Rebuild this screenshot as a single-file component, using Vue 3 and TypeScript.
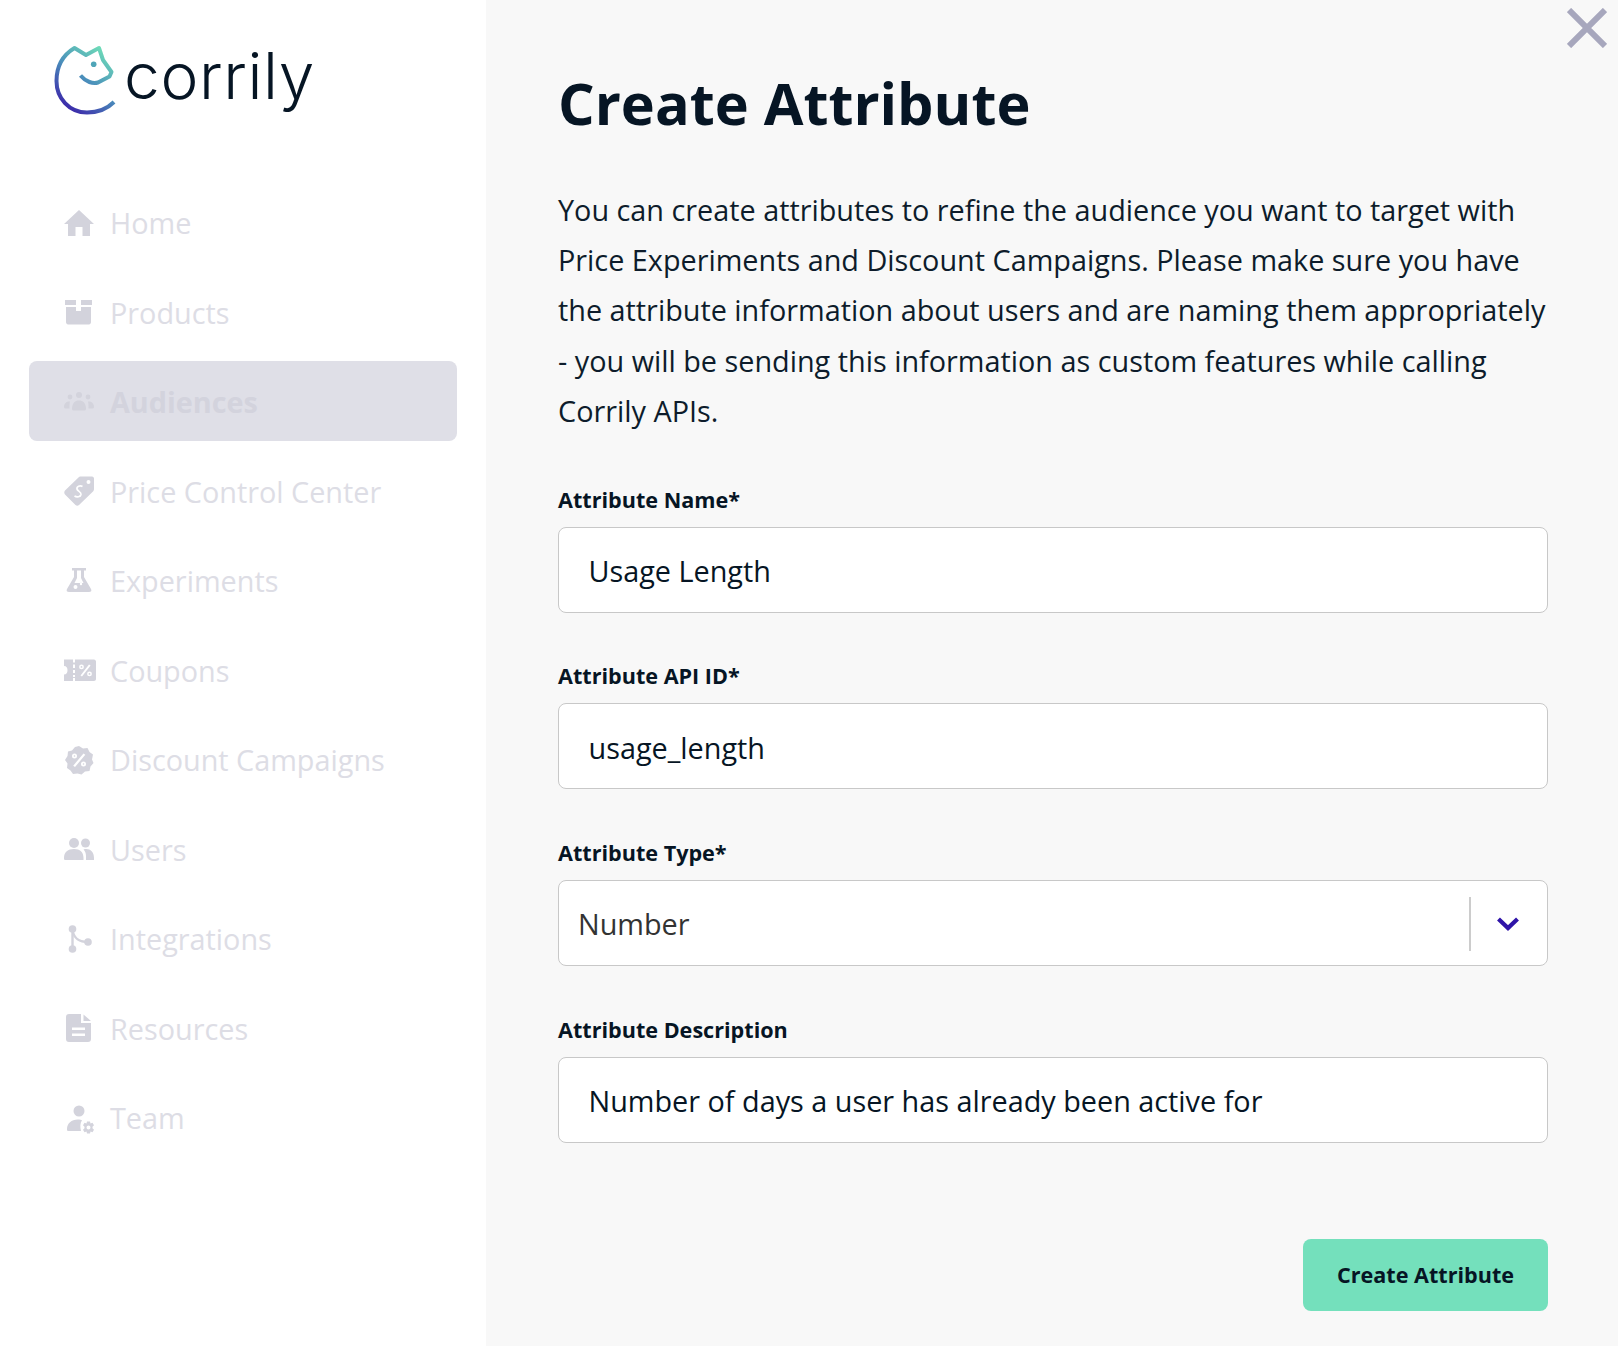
<script setup lang="ts">
const navItems = [
  { key: 'home', label: 'Home' },
  { key: 'products', label: 'Products' },
  { key: 'audiences', label: 'Audiences', active: true },
  { key: 'price', label: 'Price Control Center' },
  { key: 'experiments', label: 'Experiments' },
  { key: 'coupons', label: 'Coupons' },
  { key: 'discount', label: 'Discount Campaigns' },
  { key: 'users', label: 'Users' },
  { key: 'integrations', label: 'Integrations' },
  { key: 'resources', label: 'Resources' },
  { key: 'team', label: 'Team' },
]
</script>

<template>
  <div class="page">
    <aside class="sidebar">
      <div class="brand">
        <svg class="mark" viewBox="50 40 70 80" width="70" height="80" fill="none">
          <defs>
            <linearGradient id="catGrad" x1="60" y1="108" x2="104" y2="48" gradientUnits="userSpaceOnUse">
              <stop offset="0" stop-color="#3a1fa8" />
              <stop offset="0.5" stop-color="#4a8ebb" />
              <stop offset="1" stop-color="#70e0b8" />
            </linearGradient>
          </defs>
          <path
            d="M113 102C106 109 97 112.500 86 112.500C68 112.500 55.500 98 55.500 81C55.500 66 62 55 73.500 48L85 55L98 48L102 60L110.500 72L108.500 76.500L97 82.500C92 84 85 82 79.500 75.500"
            stroke="url(#catGrad)"
            stroke-width="4"
            stroke-linejoin="round"
          />
          <circle cx="92.700" cy="64.300" r="2.800" fill="#4fa5b8" />
        </svg>
        <span class="wordmark">corrily</span>
      </div>

      <nav class="nav">
        <a v-for="item in navItems" :key="item.key" class="nav-item" :class="{ active: item.active }">
          <svg class="icon" viewBox="0 0 30 30" width="30" height="30" fill="currentColor">
            <path v-if="item.key === 'home'" d="M15 2L30 16H26V28H18.500V19H11.500V28H4V16H0Z" />
            <template v-else-if="item.key === 'products'">
              <path d="M1 3H12V8H1ZM17 3H28V8H17Z" />
              <path d="M2 10H12V14H17V10H27V25C27 26.500 26 27.500 25 27.500H4C3 27.500 2 26.500 2 25Z" />
            </template>
            <template v-else-if="item.key === 'audiences'">
              <circle cx="15" cy="8" r="3" /><circle cx="6" cy="10" r="2.400" /><circle cx="24" cy="10" r="2.400" />
              <path d="M8 22C8 16 11 13.500 15 13.500C19 13.500 22 16 22 22C22 23 21 23.500 20 23.500H10C9 23.500 8 23 8 22Z" />
              <path d="M0 20C0 16 3 14 6 14.500C5.500 16 5.500 18 5.500 21.500H2C1 21.500 0 21 0 20ZM30 20C30 16 27 14 24 14.500C24.500 16 24.500 18 24.500 21.500H28C29 21.500 30 21 30 20Z" />
            </template>
            <template v-else-if="item.key === 'price'">
              <path
                fill-rule="evenodd"
                d="M17 0.500H28C29.200 0.500 30 1.500 30 2.500V13C30 14 29.500 15 29 15.500L15 29C14 30 12.500 30 11.500 29L1 18.500C0 17.500 0 15.500 1 14.500L15 1C15.700 0.500 16.300 0.500 17 0.500ZM24.500 4A2 2 0 1 0 24.500 8A2 2 0 1 0 24.500 4Z"
              />
              <path
                d="M18.500 10.500C16 9 12.500 10.500 13 13C13.500 15.500 17.500 15.500 17 18.500C16.500 21 13 21.500 10.500 20"
                fill="none"
                stroke="#fff"
                stroke-width="1.700"
              />
            </template>
            <path
              v-else-if="item.key === 'experiments'"
              fill-rule="evenodd"
              d="M8 2H22V4.500H20V11L27 23C28 25 27 26 25 26H5C3 26 2 25 3 23L10 11V4.500H8ZM13 4.500V12L10.500 17H19.500L17 12V4.500ZM11.500 19A2 2 0 1 0 11.500 23A2 2 0 1 0 11.500 19ZM17 16.800A1.200 1.200 0 1 0 17 19.200A1.200 1.200 0 1 0 17 16.800Z"
            />
            <path
              v-else-if="item.key === 'coupons'"
              fill-rule="evenodd"
              d="M0 4.500H9V7.500H11V4.500H30C31 4.500 32 5.500 32 6.500V24C32 25 31 26 30 26H11V23H9V26H0V19.500C2.500 19.500 3.500 17.500 3.500 15.200C3.500 13 2.500 11 0 11ZM9 9.500V13H11V9.500ZM9 15V18H11V15ZM9 20V22H11V20ZM25 9.500L26.600 10.500L18 21.500L16.500 20.500ZM17.500 9.500A2.400 2.400 0 1 0 17.500 14.300A2.400 2.400 0 1 0 17.500 9.500ZM17.500 11A0.900 0.900 0 1 1 17.500 12.800A0.900 0.900 0 1 1 17.500 11ZM25.500 16.500A2.400 2.400 0 1 0 25.500 21.300A2.400 2.400 0 1 0 25.500 16.500ZM25.500 18A0.900 0.900 0 1 1 25.500 19.800A0.900 0.900 0 1 1 25.500 18Z"
            />
            <path
              v-else-if="item.key === 'discount'"
              fill-rule="evenodd"
              d="M15 1L19 3.500L23.500 3L25.500 7L29 9.500L28 14.500L29.500 18L26.500 21.500L25.500 26L21 26.500L17.500 29.500L13.500 28.500L9 29L6.500 25.500L3 23L3.500 18.500L1 15L3.500 11L4 6.500L8 5.500L11 2ZM19.500 8.500L21.300 9.800L11 22L9.200 20.700ZM10.500 8.500A2.500 2.500 0 1 0 10.500 13.500A2.500 2.500 0 1 0 10.500 8.500ZM10.500 10.200A0.800 0.800 0 1 1 10.500 11.800A0.800 0.800 0 1 1 10.500 10.200ZM19.500 16.500A2.500 2.500 0 1 0 19.500 21.500A2.500 2.500 0 1 0 19.500 16.500ZM19.500 18.200A0.800 0.800 0 1 1 19.500 19.800A0.800 0.800 0 1 1 19.500 18.200Z"
            />
            <template v-else-if="item.key === 'users'">
              <circle cx="10" cy="9" r="5" /><circle cx="21.500" cy="9" r="4.500" />
              <path d="M0 24C0 18 4 15 10 15C16 15 19.500 18 19.500 24V26H1C0 26 0 25 0 24ZM22 26V22C22 19 21 17 19.500 15.500C25 14 30 17 30 24V26Z" />
            </template>
            <template v-else-if="item.key === 'integrations'">
              <circle cx="8.500" cy="5" r="3.800" /><circle cx="8.500" cy="25" r="3.800" /><circle cx="24" cy="18" r="3.800" />
              <path d="M7.300 5H9.700V25H7.300Z" />
              <path d="M8 6L9.800 6C10.500 12 14 16.800 24 16.800V19.200C15 19.200 9 15 8 8Z" />
            </template>
            <path
              v-else-if="item.key === 'resources'"
              fill-rule="evenodd"
              d="M5 1H17V10H27V26C27 28 26 29 24 29H5C3 29 2 28 2 26V4C2 2 3 1 5 1ZM19.500 1.500L27 8H19.500ZM8 14.500V17H21V14.500ZM8 20.500V23H21V20.500Z"
            />
            <template v-else-if="item.key === 'team'">
              <circle cx="15" cy="8" r="5.500" />
              <path d="M3 26C3 20 8 16 15 16.500C16 16.500 17 16.800 18 17.200C16 20 16 24 17 28H4C3 28 3 27 3 26Z" />
              <path
                fill-rule="evenodd"
                d="M23 18.500H26L26.500 20.500L28.500 19.800L30 22.300L28.500 23.800V25.200L30 26.700L28.500 29.200L26.500 28.500L26 30.500H23L22.500 28.500L20.500 29.200L19 26.700L20.500 25.200V23.800L19 22.300L20.500 19.800L22.500 20.500ZM24.500 22.500A2 2 0 1 0 24.500 26.500A2 2 0 1 0 24.500 22.500Z"
              />
            </template>
          </svg>
          <span class="nav-label">{{ item.label }}</span>
        </a>
      </nav>
    </aside>

    <main class="main">
      <h1 class="title">Create Attribute</h1>
      <p class="intro">
        You can create attributes to refine the audience you want to target with Price Experiments and Discount
        Campaigns. Please make sure you have the attribute information about users and are naming them appropriately
        - you will be sending this information as custom features while calling Corrily APIs.
      </p>

      <form class="form" @submit.prevent>
        <div class="field">
          <label class="label">Attribute Name*</label>
          <div class="input">Usage Length</div>
        </div>
        <div class="field">
          <label class="label">Attribute API ID*</label>
          <div class="input">usage_length</div>
        </div>
        <div class="field">
          <label class="label">Attribute Type*</label>
          <div class="select">
            <span class="select-value">Number</span>
            <span class="select-divider"></span>
            <svg class="chevron" viewBox="0 0 22 14" width="22" height="14" fill="none">
              <path d="M1.500 2L11 11L20.500 2" stroke="#2f14a8" stroke-width="4.200" />
            </svg>
          </div>
        </div>
        <div class="field">
          <label class="label">Attribute Description</label>
          <div class="input">Number of days a user has already been active for</div>
        </div>
        <div class="actions">
          <button class="submit" type="submit">Create Attribute</button>
        </div>
      </form>

      <button class="close" type="button" aria-label="Close">
        <svg viewBox="0 0 40 40" width="40" height="40">
          <path d="M2 2L38 38M38 2L2 38" stroke="#a7a7bd" stroke-width="6" />
        </svg>
      </button>
    </main>
  </div>
</template>

<style>
html,
body {
  margin: 0;
  background: #f8f8f8;
}
</style>

<style scoped>
.page {
  display: flex;
  width: 1618px;
  height: 1346px;
  overflow: hidden;
  font-family: 'Open Sans', 'Liberation Sans', sans-serif;
  color: #061524;
}

.sidebar {
  box-sizing: border-box;
  width: 486px;
  padding: 0 29px;
  background: #fff;
  flex-shrink: 0;
}

.brand {
  display: flex;
  align-items: center;
  height: 182px;
  padding-left: 22px;
  box-sizing: border-box;
  padding-bottom: 22px;
}

.mark {
  flex-shrink: 0;
}

.wordmark {
  margin-left: 3px;
  margin-top: -8px;
  font-family: Inter, 'Liberation Sans', sans-serif;
  font-size: 64px;
  font-weight: 350;
  letter-spacing: 0.600px;
  line-height: 1;
  color: #061524;
}

.nav {
  display: flex;
  flex-direction: column;
  gap: 9.500px;
}

.nav-item {
  display: flex;
  align-items: center;
  gap: 16.500px;
  box-sizing: border-box;
  height: 80px;
  padding: 1.500px 0 0 34.500px;
  border-radius: 8px;
  color: #dddde5;
  font-size: 28.800px;
}

.nav-item .icon {
  color: #d3d3dc;
  flex-shrink: 0;
  overflow: visible;
}

.nav-item.active {
  background: #dfdfe7;
  color: #d3d3dd;
  font-weight: 700;
}

.main {
  position: relative;
  flex: 1;
  box-sizing: border-box;
  padding: 0 70px 0 72px;
  background: #f8f8f8;
}

.title {
  margin: 0;
  padding-top: 61px;
  font-size: 57.600px;
  line-height: 84px;
  font-weight: 700;
}

.intro {
  margin: 40px 0 0;
  font-size: 28.800px;
  line-height: 50.200px;
  color: #0d1c2b;
}

.form {
  margin-top: 48.500px;
}

.field {
  margin-bottom: 48.700px;
}

.label {
  display: block;
  margin-bottom: 12px;
  font-size: 21.600px;
  line-height: 30px;
  font-weight: 700;
}

.input,
.select {
  box-sizing: border-box;
  height: 86px;
  display: flex;
  align-items: center;
  padding-top: 2px;
  background: #fff;
  border: 1px solid #c8c8c8;
  border-radius: 8px;
  font-size: 28.800px;
}

.input {
  padding-left: 29.500px;
}

.select {
  padding-left: 19px;
}

.select-value {
  flex: 1;
  color: #333;
}

.select-divider {
  width: 2px;
  height: 54px;
  background: #ccc;
}

.chevron {
  margin: 0 28px 0 26px;
}

.actions {
  display: flex;
  justify-content: flex-end;
  margin-top: 96px;
}

.submit {
  width: 245px;
  height: 72px;
  border: 0;
  border-radius: 8px;
  background: #74e0bc;
  color: #061524;
  font-family: inherit;
  font-size: 21.600px;
  font-weight: 700;
}

.close {
  position: absolute;
  top: 8px;
  right: 11px;
  padding: 0;
  border: 0;
  background: none;
  line-height: 0;
}
</style>
